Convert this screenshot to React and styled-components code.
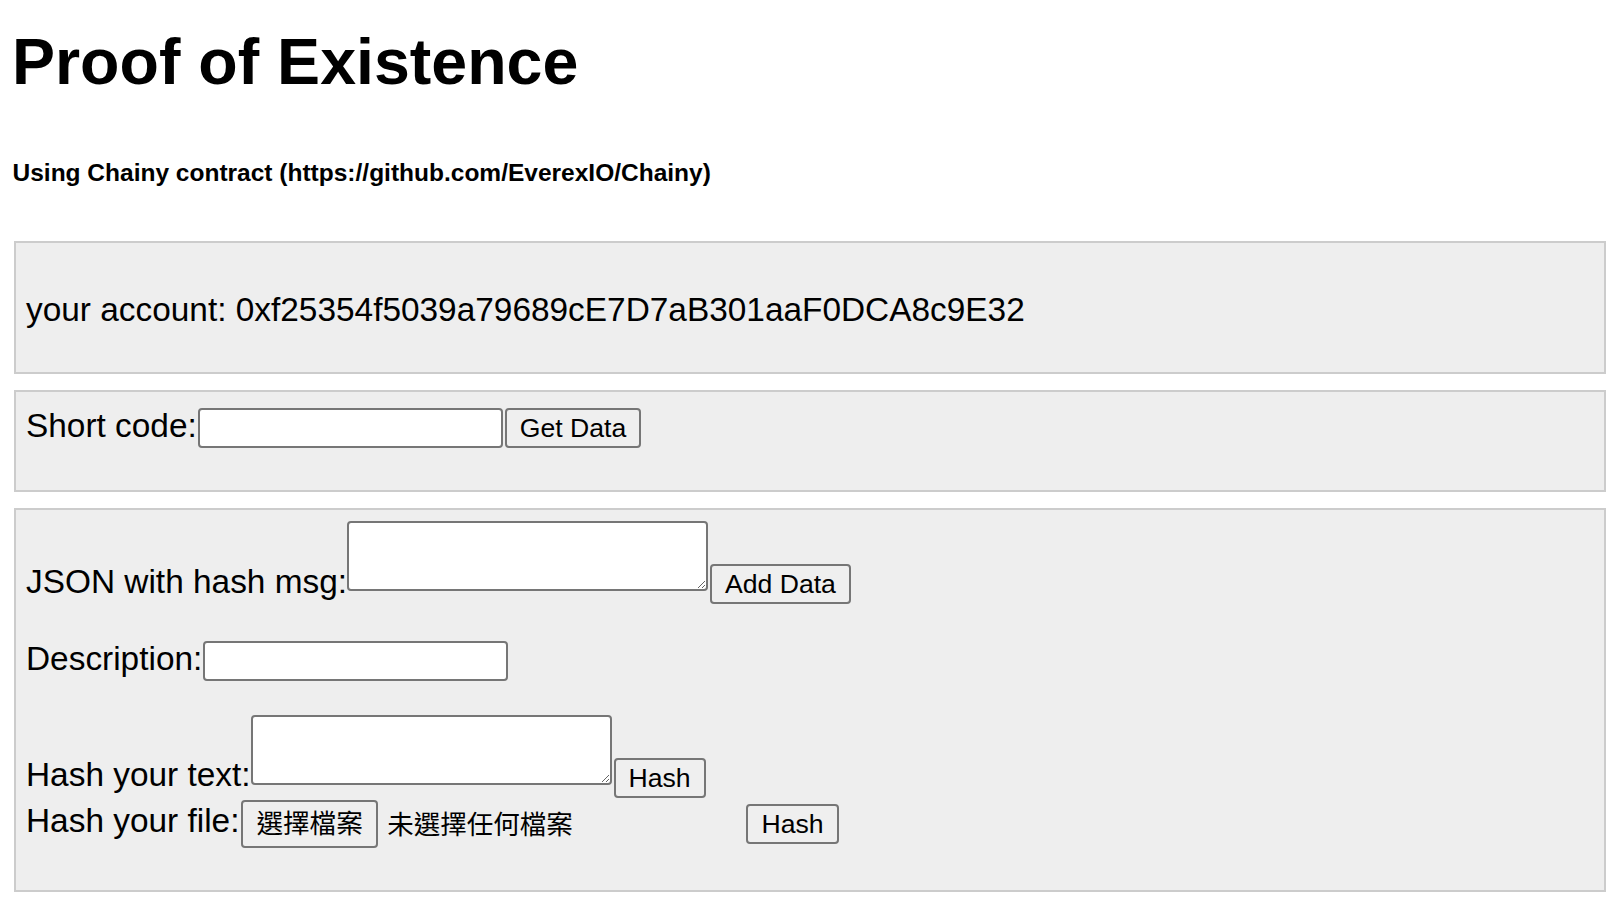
import styled, { createGlobalStyle } from 'styled-components'

const GlobalStyle = createGlobalStyle`
  body {
    margin: 0;
    background: #fff;
    color: #000;
    font-family: "Liberation Sans", Arial, "Noto Sans CJK TC", sans-serif;
  }
`

const Page = styled.div`
  padding: 30px 10px 0 8px;
`

const Title = styled.h1`
  margin: 0 0 0 4px;
  font-size: 64.5px;
  line-height: 64.5px;
  font-weight: bold;
`

const Subtitle = styled.h5`
  margin: 66.4px 0 0 4.5px;
  font-size: 24.5px;
  line-height: 24.5px;
  font-weight: bold;
`

const Panel = styled.div`
  margin: ${(p) => p.gap}px 0 0 6px;
  padding: ${(p) => p.pad};
  background: #eee;
  border: 2px solid #ccc;
`

const Row = styled.div`
  display: flex;
  align-items: flex-end;
  margin-top: ${(p) => p.gap || 0}px;
`

const Label = styled.span`
  font-size: 33.4px;
  line-height: 33.5px;
  margin-bottom: ${(p) => p.drop || 0}px;
  white-space: pre;
`

const TextInput = styled.input`
  box-sizing: border-box;
  width: 305px;
  height: 40px;
  margin: 0 0 0 1px;
  padding: 0 4px;
  border: 2px solid #767676;
  border-radius: 4px;
  background: #fff;
  font: 26px "Liberation Sans", sans-serif;
`

const TextArea = styled.textarea`
  box-sizing: border-box;
  width: 361px;
  height: 70px;
  margin: 0 0 ${(p) => p.drop || 0}px;
  padding: 4px;
  border: 2px solid #767676;
  border-radius: 4px;
  background: #fff;
  font: 26px "Liberation Mono", monospace;
`

const Button = styled.button`
  box-sizing: border-box;
  height: ${(p) => (p.tall ? 48 : 40)}px;
  margin: 0 0 ${(p) => p.drop || 0}px ${(p) => p.gap ?? 2}px;
  padding: 0 13px;
  border: 2px solid #767676;
  border-radius: 4px;
  background: #efefef;
  color: #000;
  font-family: "Liberation Sans", "Noto Sans CJK TC", sans-serif;
  font-size: 26.6px;
  line-height: 32px;
  white-space: nowrap;
`

const FilePicker = styled.div`
  display: flex;
  align-items: flex-end;
  width: 505px;
`

const FileName = styled.span`
  margin: 0 0 11px 9.5px;
  font-family: "Noto Sans CJK TC", sans-serif;
  font-size: 26.5px;
  line-height: 26.5px;
`

export default function App() {
  return (
    <>
      <GlobalStyle />
      <Page>
        <Title>Proof of Existence</Title>
        <Subtitle>Using Chainy contract (https://github.com/EverexIO/Chainy)</Subtitle>

        <Panel gap={55.4} pad="49.9px 10px 45.4px">
          <Label>your account: 0xf25354f5039a79689cE7D7aB301aaF0DCA8c9E32</Label>
        </Panel>

        <Panel gap={16.5} pad="15.5px 10px 42px">
          <Row>
            <Label drop={4.9}>Short code:</Label>
            <TextInput type="text" />
            <Button>Get Data</Button>
          </Row>
        </Panel>

        <Panel gap={16} pad="11px 10px 42px">
          <Row>
            <Label drop={5.3}>JSON with hash msg:</Label>
            <TextArea drop={13} />
            <Button>Add Data</Button>
          </Row>
          <Row gap={37}>
            <Label drop={4.9}>Description:</Label>
            <TextInput type="text" />
          </Row>
          <Row gap={34}>
            <Label drop={6}>Hash your text:</Label>
            <TextArea drop={13} />
            <Button>Hash</Button>
          </Row>
          <Row gap={2}>
            <Label drop={10}>Hash your file:</Label>
            <FilePicker>
              <Button tall gap={2}>選擇檔案</Button>
              <FileName>未選擇任何檔案</FileName>
            </FilePicker>
            <Button drop={4}>Hash</Button>
          </Row>
        </Panel>
      </Page>
    </>
  )
}
